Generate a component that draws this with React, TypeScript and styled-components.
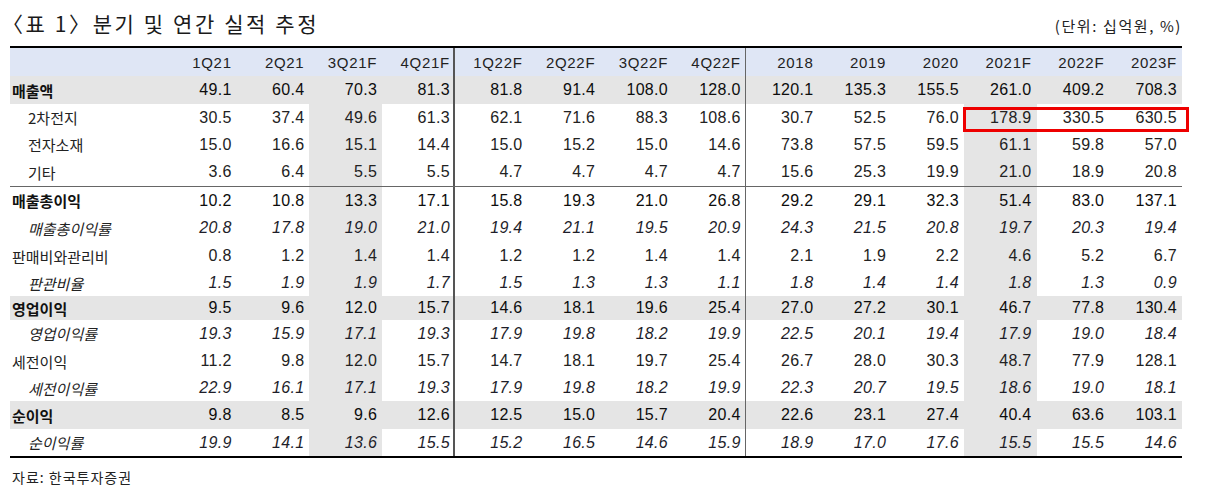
import styled, { createGlobalStyle, css } from 'styled-components';

const GlobalStyle = createGlobalStyle`
  body {
    margin: 0;
    background: #ffffff;
    font-family: 'Liberation Sans', 'Noto Sans CJK KR', sans-serif;
    color: #1c1c1c;
  }
`;

const Page = styled.div`
  width: 1217px;
  padding: 8px 0 0 10px;
  box-sizing: border-box;
`;

const TitleBar = styled.div`
  width: 1172px;
  height: 30px;
  margin-bottom: 8px;
  display: flex;
  justify-content: space-between;
  align-items: center;
`;

const Title = styled.h1`
  margin: 0;
  font-family: 'Noto Sans CJK KR', sans-serif;
  font-size: 21px;
  font-weight: 400;
  color: #1a1a1a;
  letter-spacing: 2.6px;
`;

// the CJK opening bracket sits in the right half of its box, pull the empty half in
const OpenBracket = styled.span`
  margin-left: -8px;
`;

const Unit = styled.span`
  padding-top: 4px;
  font-family: 'Noto Sans CJK KR', sans-serif;
  font-size: 15px;
  letter-spacing: 1.6px;
  color: #222;
`;

const TableWrap = styled.div`
  position: relative;
  width: 1172px;
  border-top: 2px solid #000;
  border-bottom: 2px solid #000;
`;

type RowKind = 'head' | 'main' | 'sub' | 'plain' | 'ratio';

const Row = styled.div<{ $h: number; $band?: 'blue' | 'grey'; $rule?: boolean }>`
  display: grid;
  grid-template-columns: 154px repeat(14, 1fr);
  height: ${(p) => p.$h}px;
  box-sizing: border-box;
  background: ${(p) => (p.$band === 'blue' ? '#dfe6f5' : p.$band === 'grey' ? '#e5e5e5' : 'transparent')};
  ${(p) =>
    p.$rule &&
    css`
      border-top: 1px solid #666;
    `}
`;

const Label = styled.div<{ $kind: RowKind }>`
  display: flex;
  align-items: center;
  padding-left: ${(p) => (p.$kind === 'sub' || p.$kind === 'ratio' ? 18 : 2)}px;
  font-family: 'Noto Sans CJK KR', sans-serif;
  font-size: 15px;
  white-space: nowrap;
  font-weight: ${(p) => (p.$kind === 'main' ? 700 : 400)};
  font-style: ${(p) => (p.$kind === 'ratio' ? 'italic' : 'normal')};
  color: ${(p) => (p.$kind === 'main' ? '#111' : '#222')};
`;

const Cell = styled.div<{ $kind: RowKind; $shade?: boolean; $divider?: 'thick' | 'thin' }>`
  display: flex;
  align-items: center;
  justify-content: flex-end;
  padding-right: 5px;
  font-family: 'Liberation Sans', sans-serif;
  font-size: ${(p) => (p.$kind === 'head' ? 15 : 16)}px;
  letter-spacing: ${(p) => (p.$kind === 'head' ? 0.7 : 0.3)}px;
  font-style: ${(p) => (p.$kind === 'ratio' ? 'italic' : 'normal')};
  color: ${(p) => (p.$kind === 'main' ? '#0d0d0d' : p.$kind === 'ratio' ? '#1e1e2a' : '#222')};
  background: ${(p) => (p.$shade ? '#e5e5e5' : 'transparent')};
  box-shadow: ${(p) =>
    p.$divider === 'thick' ? 'inset -2px 0 0 #555' : p.$divider === 'thin' ? 'inset -1px 0 0 #666' : 'none'};
`;

const Highlight = styled.div`
  position: absolute;
  left: 953px;
  top: 59px;
  width: 226px;
  height: 25px;
  box-sizing: border-box;
  border: 3px solid #ee0000;
  pointer-events: none;
`;

const Source = styled.p`
  margin: 9px 0 0 2px;
  line-height: 20px;
  font-family: 'Noto Sans CJK KR', sans-serif;
  font-size: 14px;
  letter-spacing: 1px;
  color: #222;
`;

const columns = ['1Q21', '2Q21', '3Q21F', '4Q21F', '1Q22F', '2Q22F', '3Q22F', '4Q22F', '2018', '2019', '2020', '2021F', '2022F', '2023F'];
const shaded = [2, 11];

interface RowData {
  label: string;
  kind: RowKind;
  h: number;
  band?: boolean;
  rule?: boolean;
  values: string;
}

const rows: RowData[] = [
  { label: '매출액', kind: 'main', h: 28, band: true, values: '49.1 60.4 70.3 81.3 81.8 91.4 108.0 128.0 120.1 135.3 155.5 261.0 409.2 708.3' },
  { label: '2차전지', kind: 'sub', h: 27, values: '30.5 37.4 49.6 61.3 62.1 71.6 88.3 108.6 30.7 52.5 76.0 178.9 330.5 630.5' },
  { label: '전자소재', kind: 'sub', h: 27, values: '15.0 16.6 15.1 14.4 15.0 15.2 15.0 14.6 73.8 57.5 59.5 61.1 59.8 57.0' },
  { label: '기타', kind: 'sub', h: 28, values: '3.6 6.4 5.5 5.5 4.7 4.7 4.7 4.7 15.6 25.3 19.9 21.0 18.9 20.8' },
  { label: '매출총이익', kind: 'main', h: 28, rule: true, values: '10.2 10.8 13.3 17.1 15.8 19.3 21.0 26.8 29.2 29.1 32.3 51.4 83.0 137.1' },
  { label: '매출총이익률', kind: 'ratio', h: 28, values: '20.8 17.8 19.0 21.0 19.4 21.1 19.5 20.9 24.3 21.5 20.8 19.7 20.3 19.4' },
  { label: '판매비와관리비', kind: 'plain', h: 28, values: '0.8 1.2 1.4 1.4 1.2 1.2 1.4 1.4 2.1 1.9 2.2 4.6 5.2 6.7' },
  { label: '판관비율', kind: 'ratio', h: 26, values: '1.5 1.9 1.9 1.7 1.5 1.3 1.3 1.1 1.8 1.4 1.4 1.8 1.3 0.9' },
  { label: '영업이익', kind: 'main', h: 24, band: true, values: '9.5 9.6 12.0 15.7 14.6 18.1 19.6 25.4 27.0 27.2 30.1 46.7 77.8 130.4' },
  { label: '영업이익률', kind: 'ratio', h: 27, values: '19.3 15.9 17.1 19.3 17.9 19.8 18.2 19.9 22.5 20.1 19.4 17.9 19.0 18.4' },
  { label: '세전이익', kind: 'plain', h: 28, values: '11.2 9.8 12.0 15.7 14.7 18.1 19.7 25.4 26.7 28.0 30.3 48.7 77.9 128.1' },
  { label: '세전이익률', kind: 'ratio', h: 26, values: '22.9 16.1 17.1 19.3 17.9 19.8 18.2 19.9 22.3 20.7 19.5 18.6 19.0 18.1' },
  { label: '순이익', kind: 'main', h: 28, band: true, values: '9.8 8.5 9.6 12.6 12.5 15.0 15.7 20.4 22.6 23.1 27.4 40.4 63.6 103.1' },
  { label: '순이익률', kind: 'ratio', h: 27, values: '19.9 14.1 13.6 15.5 15.2 16.5 14.6 15.9 18.9 17.0 17.6 15.5 15.5 14.6' },
];

const dividerOf = (i: number) => (i === 3 ? 'thick' : i === 7 ? 'thin' : undefined);

const App = () => {
  return (
    <Page>
      <GlobalStyle />
      <TitleBar>
        <Title>
          <OpenBracket>〈</OpenBracket>표 1〉분기 및 연간 실적 추정
        </Title>
        <Unit>(단위: 십억원, %)</Unit>
      </TitleBar>
      <TableWrap>
        <Row $h={28} $band="blue">
          <Label $kind="head" />
          {columns.map((c, i) => (
            <Cell key={c} $kind="head" $divider={dividerOf(i)}>
              {c}
            </Cell>
          ))}
        </Row>
        {rows.map((r) => (
          <Row key={r.label} $h={r.h} $band={r.band ? 'grey' : undefined} $rule={r.rule}>
            <Label $kind={r.kind}>{r.label}</Label>
            {r.values.split(' ').map((v, i) => (
              <Cell key={i} $kind={r.kind} $shade={!r.band && shaded.includes(i)} $divider={dividerOf(i)}>
                {v}
              </Cell>
            ))}
          </Row>
        ))}
        <Highlight />
      </TableWrap>
      <Source>자료: 한국투자증권</Source>
    </Page>
  );
};

export default App;
